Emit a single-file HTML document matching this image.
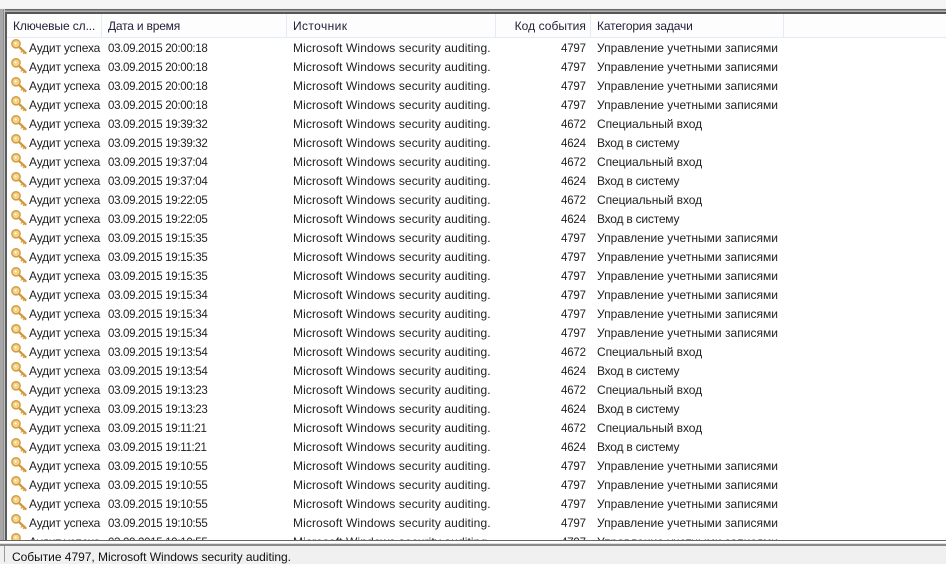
<!DOCTYPE html>
<html><head><meta charset="utf-8">
<style>
html,body{margin:0;padding:0}
body{width:946px;height:562px;overflow:hidden;position:relative;background:#f0f0f0;font-family:"Liberation Sans",sans-serif;font-size:12px;color:#222}
.b{position:absolute}
#list{position:absolute;left:7px;top:14px;width:939px;height:526px;background:#fff;overflow:hidden}
#head{position:absolute;left:0;top:0;width:939px;height:23px;background:#fdfdfd;border-bottom:1px solid #e3ebf5;box-sizing:content-box}
#head i{position:absolute;top:0;width:1px;height:23px;background:#e3ebf5}
#head span{position:absolute;top:5px;white-space:nowrap;color:#22223a}
.r{position:absolute;left:0;width:939px;height:19px;white-space:nowrap}
.r span{position:absolute;top:3px;line-height:14px}
.r svg{position:absolute;left:3px;top:0}
.a{left:22px;letter-spacing:-.18px}.r .d{top:4px;left:101px;font-size:11.5px;letter-spacing:-.32px}.s{left:286px;letter-spacing:.1px}.r .c{top:4px;left:554px;width:24px;text-align:right;font-size:11.5px;letter-spacing:-.2px}.t{left:590px;letter-spacing:.02px}.u{left:590px;letter-spacing:-.08px}.v{left:590px;letter-spacing:-.22px}
</style></head><body>
<svg width="0" height="0" style="position:absolute"><defs><symbol id="k" viewBox="0 0 18 18"><path d="M8 8L15.5 15" stroke="#d2973a" stroke-width="2.3" fill="none" stroke-linecap="round"/><path d="M12 13.2l-1.2 1.3M14 14.8l-1 1.1" stroke="#dfa94e" stroke-width="1.3" fill="none"/><circle cx="6" cy="5.8" r="4.1" fill="#f6d88e" stroke="#d49d42" stroke-width="1.5"/><circle cx="5.6" cy="5.4" r="1.6" fill="#fff8e2" stroke="#e3bb70" stroke-width=".6"/></symbol></defs></svg>
<div class="b" style="left:0;top:0;width:946px;height:8px;background:#f5f5f5"></div>
<div class="b" style="left:0;top:9px;width:946px;height:1px;background:#6b6b6b"></div>
<div class="b" style="left:0;top:10px;width:946px;height:1px;background:#8f8f8f"></div>
<div class="b" style="left:0;top:11px;width:946px;height:1px;background:#b0b0b0"></div>
<div class="b" style="left:0;top:12px;width:946px;height:2px;background:#565656"></div>
<div class="b" style="left:0;top:9px;width:3px;height:532px;background:#a8a8a8"></div>
<div class="b" style="left:3px;top:9px;width:1px;height:532px;background:#8f8f8f"></div>
<div class="b" style="left:4px;top:9px;width:1px;height:532px;background:#c4c4c4"></div>
<div class="b" style="left:5px;top:12px;width:2px;height:529px;background:#5a5a5a"></div>
<div id="list">
<div id="head"><span style="left:6px;letter-spacing:-.1px">Ключевые сл...</span><i style="left:94px"></i><span style="left:101px;letter-spacing:-.2px">Дата и время</span><i style="left:279px"></i><span style="left:286px;letter-spacing:.4px">Источник</span><i style="left:488px"></i><span style="left:479px;width:100px;text-align:right;letter-spacing:.06px">Код события</span><i style="left:583px"></i><span style="left:590px;letter-spacing:-.14px">Категория задачи</span><i style="left:776px"></i></div>
<div class="r" style="top:24px"><svg width="18" height="18"><use href="#k"/></svg><span class="a">Аудит успеха</span><span class="d">03.09.2015 20:00:18</span><span class="s">Microsoft Windows security auditing.</span><span class="c">4797</span><span class="t">Управление учетными записями</span></div>
<div class="r" style="top:43px"><svg width="18" height="18"><use href="#k"/></svg><span class="a">Аудит успеха</span><span class="d">03.09.2015 20:00:18</span><span class="s">Microsoft Windows security auditing.</span><span class="c">4797</span><span class="t">Управление учетными записями</span></div>
<div class="r" style="top:62px"><svg width="18" height="18"><use href="#k"/></svg><span class="a">Аудит успеха</span><span class="d">03.09.2015 20:00:18</span><span class="s">Microsoft Windows security auditing.</span><span class="c">4797</span><span class="t">Управление учетными записями</span></div>
<div class="r" style="top:81px"><svg width="18" height="18"><use href="#k"/></svg><span class="a">Аудит успеха</span><span class="d">03.09.2015 20:00:18</span><span class="s">Microsoft Windows security auditing.</span><span class="c">4797</span><span class="t">Управление учетными записями</span></div>
<div class="r" style="top:100px"><svg width="18" height="18"><use href="#k"/></svg><span class="a">Аудит успеха</span><span class="d">03.09.2015 19:39:32</span><span class="s">Microsoft Windows security auditing.</span><span class="c">4672</span><span class="u">Специальный вход</span></div>
<div class="r" style="top:119px"><svg width="18" height="18"><use href="#k"/></svg><span class="a">Аудит успеха</span><span class="d">03.09.2015 19:39:32</span><span class="s">Microsoft Windows security auditing.</span><span class="c">4624</span><span class="v">Вход в систему</span></div>
<div class="r" style="top:138px"><svg width="18" height="18"><use href="#k"/></svg><span class="a">Аудит успеха</span><span class="d">03.09.2015 19:37:04</span><span class="s">Microsoft Windows security auditing.</span><span class="c">4672</span><span class="u">Специальный вход</span></div>
<div class="r" style="top:157px"><svg width="18" height="18"><use href="#k"/></svg><span class="a">Аудит успеха</span><span class="d">03.09.2015 19:37:04</span><span class="s">Microsoft Windows security auditing.</span><span class="c">4624</span><span class="v">Вход в систему</span></div>
<div class="r" style="top:176px"><svg width="18" height="18"><use href="#k"/></svg><span class="a">Аудит успеха</span><span class="d">03.09.2015 19:22:05</span><span class="s">Microsoft Windows security auditing.</span><span class="c">4672</span><span class="u">Специальный вход</span></div>
<div class="r" style="top:195px"><svg width="18" height="18"><use href="#k"/></svg><span class="a">Аудит успеха</span><span class="d">03.09.2015 19:22:05</span><span class="s">Microsoft Windows security auditing.</span><span class="c">4624</span><span class="v">Вход в систему</span></div>
<div class="r" style="top:214px"><svg width="18" height="18"><use href="#k"/></svg><span class="a">Аудит успеха</span><span class="d">03.09.2015 19:15:35</span><span class="s">Microsoft Windows security auditing.</span><span class="c">4797</span><span class="t">Управление учетными записями</span></div>
<div class="r" style="top:233px"><svg width="18" height="18"><use href="#k"/></svg><span class="a">Аудит успеха</span><span class="d">03.09.2015 19:15:35</span><span class="s">Microsoft Windows security auditing.</span><span class="c">4797</span><span class="t">Управление учетными записями</span></div>
<div class="r" style="top:252px"><svg width="18" height="18"><use href="#k"/></svg><span class="a">Аудит успеха</span><span class="d">03.09.2015 19:15:35</span><span class="s">Microsoft Windows security auditing.</span><span class="c">4797</span><span class="t">Управление учетными записями</span></div>
<div class="r" style="top:271px"><svg width="18" height="18"><use href="#k"/></svg><span class="a">Аудит успеха</span><span class="d">03.09.2015 19:15:34</span><span class="s">Microsoft Windows security auditing.</span><span class="c">4797</span><span class="t">Управление учетными записями</span></div>
<div class="r" style="top:290px"><svg width="18" height="18"><use href="#k"/></svg><span class="a">Аудит успеха</span><span class="d">03.09.2015 19:15:34</span><span class="s">Microsoft Windows security auditing.</span><span class="c">4797</span><span class="t">Управление учетными записями</span></div>
<div class="r" style="top:309px"><svg width="18" height="18"><use href="#k"/></svg><span class="a">Аудит успеха</span><span class="d">03.09.2015 19:15:34</span><span class="s">Microsoft Windows security auditing.</span><span class="c">4797</span><span class="t">Управление учетными записями</span></div>
<div class="r" style="top:328px"><svg width="18" height="18"><use href="#k"/></svg><span class="a">Аудит успеха</span><span class="d">03.09.2015 19:13:54</span><span class="s">Microsoft Windows security auditing.</span><span class="c">4672</span><span class="u">Специальный вход</span></div>
<div class="r" style="top:347px"><svg width="18" height="18"><use href="#k"/></svg><span class="a">Аудит успеха</span><span class="d">03.09.2015 19:13:54</span><span class="s">Microsoft Windows security auditing.</span><span class="c">4624</span><span class="v">Вход в систему</span></div>
<div class="r" style="top:366px"><svg width="18" height="18"><use href="#k"/></svg><span class="a">Аудит успеха</span><span class="d">03.09.2015 19:13:23</span><span class="s">Microsoft Windows security auditing.</span><span class="c">4672</span><span class="u">Специальный вход</span></div>
<div class="r" style="top:385px"><svg width="18" height="18"><use href="#k"/></svg><span class="a">Аудит успеха</span><span class="d">03.09.2015 19:13:23</span><span class="s">Microsoft Windows security auditing.</span><span class="c">4624</span><span class="v">Вход в систему</span></div>
<div class="r" style="top:404px"><svg width="18" height="18"><use href="#k"/></svg><span class="a">Аудит успеха</span><span class="d">03.09.2015 19:11:21</span><span class="s">Microsoft Windows security auditing.</span><span class="c">4672</span><span class="u">Специальный вход</span></div>
<div class="r" style="top:423px"><svg width="18" height="18"><use href="#k"/></svg><span class="a">Аудит успеха</span><span class="d">03.09.2015 19:11:21</span><span class="s">Microsoft Windows security auditing.</span><span class="c">4624</span><span class="v">Вход в систему</span></div>
<div class="r" style="top:442px"><svg width="18" height="18"><use href="#k"/></svg><span class="a">Аудит успеха</span><span class="d">03.09.2015 19:10:55</span><span class="s">Microsoft Windows security auditing.</span><span class="c">4797</span><span class="t">Управление учетными записями</span></div>
<div class="r" style="top:461px"><svg width="18" height="18"><use href="#k"/></svg><span class="a">Аудит успеха</span><span class="d">03.09.2015 19:10:55</span><span class="s">Microsoft Windows security auditing.</span><span class="c">4797</span><span class="t">Управление учетными записями</span></div>
<div class="r" style="top:480px"><svg width="18" height="18"><use href="#k"/></svg><span class="a">Аудит успеха</span><span class="d">03.09.2015 19:10:55</span><span class="s">Microsoft Windows security auditing.</span><span class="c">4797</span><span class="t">Управление учетными записями</span></div>
<div class="r" style="top:499px"><svg width="18" height="18"><use href="#k"/></svg><span class="a">Аудит успеха</span><span class="d">03.09.2015 19:10:55</span><span class="s">Microsoft Windows security auditing.</span><span class="c">4797</span><span class="t">Управление учетными записями</span></div>
<div class="r" style="top:518px"><svg width="18" height="18"><use href="#k"/></svg><span class="a">Аудит успеха</span><span class="d">03.09.2015 19:10:55</span><span class="s">Microsoft Windows security auditing.</span><span class="c">4797</span><span class="t">Управление учетными записями</span></div>
</div>
<div class="b" style="left:0;top:540px;width:946px;height:1px;background:#666"></div>
<div class="b" style="left:0;top:541px;width:946px;height:2px;background:#fff"></div>
<div class="b" style="left:0;top:543px;width:946px;height:1px;background:#e0e0e0"></div>
<div class="b" style="left:0;top:544px;width:946px;height:2px;background:#8a8a8a"></div>
<div class="b" style="left:0;top:546px;width:946px;height:16px;background:#f0f0f0"></div>
<div class="b" style="left:4px;top:546px;width:1px;height:16px;background:#9a9a9a"></div>
<div class="b" style="left:12px;top:550px;white-space:nowrap;line-height:14px;letter-spacing:-.03px;color:#111">Событие 4797, Microsoft Windows security auditing.</div>
</body></html>
